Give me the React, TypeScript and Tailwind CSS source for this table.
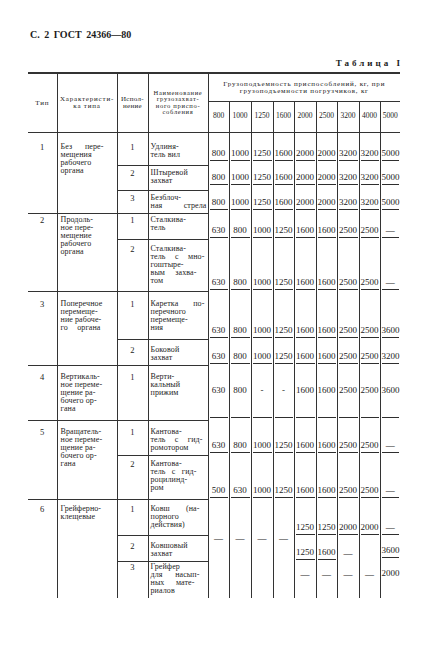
import React from "react";

type Line = string | { t: string; w: string };
type NumCell = { v: string; td: string; div: string };
type Row = { i: string; name: Line[]; h: string; pt: string; cells: NumCell[] };
type Group = { n: string; ch: Line[]; rows: Row[] };

const J = (t: string, w: string): Line => ({ t, w });

const UL = "mx-[1px] border-b border-[#2e2e2e] pb-[2px]";
const PL = "mx-[1px] pb-[2px]";

const under = (vals: string[], pb: string): NumCell[] =>
  vals.map((v) => ({ v, td: "align-bottom " + pb, div: UL }));

const A = ["630", "800", "1000", "1250", "1600", "1600", "2500", "2500", "—"];
const B = ["800", "1000", "1250", "1600", "2000", "2000", "3200", "3200", "5000"];
const empty = (n: number, td: string): NumCell[] =>
  Array.from({ length: n }, () => ({ v: "", td, div: PL }));

const groups: Group[] = [
  {
    n: "1",
    ch: [J("Без пере-", "w-[43px]"), "мещения", "рабочего", "органа"],
    rows: [
      { i: "1", name: ["Удлиня-", "тель вил"], h: "h-[33px]", pt: "pt-[10px]", cells: under(B, "pb-[4px]") },
      { i: "2", name: ["Штыревой", "захват"], h: "h-[25px]", pt: "pt-[3px]", cells: under(B, "pb-[5px]") },
      { i: "3", name: ["Безблоч-", J("ная стрела", "w-[56px]")], h: "h-[23px]", pt: "pt-[3px]", cells: under(B, "pb-[3px]") },
    ],
  },
  {
    n: "2",
    ch: ["Продоль-", "ное пере-", "мещение", "рабочего", "органа"],
    rows: [
      { i: "1", name: ["Сталкива-", "тель"], h: "h-[26px]", pt: "pt-[2px]", cells: under(A, "pb-[1px]") },
      {
        i: "2",
        name: ["Сталкива-", J("тель с мно-", "w-[54px]"), "гоштыре-", J("вым захва-", "w-[46px]"), "том"],
        h: "h-[52px]",
        pt: "pt-[5px]",
        cells: under(A, "pb-[1px]"),
      },
    ],
  },
  {
    n: "3",
    ch: ["Поперечное", "перемеще-", "ние рабоче-", J("го органа", "w-[40px]")],
    rows: [
      {
        i: "1",
        name: [J("Каретка по-", "w-[54px]"), "перечного", "перемеще-", "ния"],
        h: "h-[48px]",
        pt: "pt-[8px]",
        cells: under(["630", "800", "1000", "1250", "1600", "1600", "2500", "2500", "3600"], "pb-[1px]"),
      },
      {
        i: "2",
        name: ["Боковой", "захват"],
        h: "h-[26px]",
        pt: "pt-[6px]",
        cells: under(["630", "800", "1000", "1250", "1600", "1600", "2500", "2500", "3200"], "pb-[1px]"),
      },
    ],
  },
  {
    n: "4",
    ch: ["Вертикаль-", "ное переме-", "щение ра-", "бочего ор-", "гана"],
    rows: [
      {
        i: "1",
        name: ["Верти-", "кальный", "прижим"],
        h: "h-[55px]",
        pt: "pt-[7px]",
        cells: ["630", "800", "-", "-", "1600", "1600", "2500", "2500", "3600"].map((v) => ({
          v,
          td: "align-bottom pb-[2px]",
          div: "mx-[1px] border-b border-[#2e2e2e] pb-[22px]",
        })),
      },
    ],
  },
  {
    n: "5",
    ch: ["Вращатель-", "ное переме-", "щение ра-", "бочего ор-", "гана"],
    rows: [
      {
        i: "1",
        name: ["Кантова-", J("тель с гид-", "w-[52px]"), "ромотором"],
        h: "h-[35px]",
        pt: "pt-[7px]",
        cells: under(A, "pb-[2px]"),
      },
      {
        i: "2",
        name: ["Кантова-", J("тель с гид-", "w-[46px]"), "роцилинд-", "ром"],
        h: "h-[44px]",
        pt: "pt-[4px]",
        cells: under(["500", "630", "1000", "1250", "1600", "1600", "2500", "2500", "—"], "pb-[1px]"),
      },
    ],
  },
  {
    n: "6",
    ch: ["Грейферно-", "клещевые"],
    rows: [
      {
        i: "1",
        name: [J("Ковш (на-", "w-[49px]"), "порного", "действия)"],
        h: "h-[36px]",
        pt: "pt-[5px]",
        cells: [...empty(4, "align-bottom"), ...under(["1250", "1250", "2000", "2000", "—"], "pb-[0px]")],
      },
      {
        i: "2",
        name: ["Ковшовый", "захват"],
        h: "h-[26px]",
        pt: "pt-[6px]",
        cells: [
          ...Array.from({ length: 4 }, () => ({ v: "—", td: "align-top pt-0", div: "mx-[1px] -mt-[2px]" })),
          ...under(["1250", "1600"], "pb-[1px]"),
          { v: "—", td: "align-bottom pb-[1px]", div: PL },
          { v: "", td: "align-bottom", div: PL },
          ...under(["3600"], "pb-[3px]"),
        ],
      },
      {
        i: "3",
        name: ["Грейфер", J("для насып-", "w-[49px]"), J("ных мате-", "w-[44px]"), "риалов"],
        h: "h-[37px]",
        pt: "pt-[1px]",
        cells: [
          ...empty(4, "align-top"),
          ...Array.from({ length: 4 }, () => ({ v: "—", td: "align-top pt-[8px]", div: "mx-[1px]" })),
          { v: "2000", td: "align-top pt-[7px]", div: "mx-[1px]" },
        ],
      },
    ],
  },
];

const heads = ["800", "1000", "1250", "1600", "2000", "2500", "3200", "4000", "5000"];
const line = "border-[#333]";

function Lines({ lines }: { lines: Line[] }) {
  return (
    <>
      {lines.map((l, k) =>
        typeof l === "string" ? (
          <div key={k} className="whitespace-nowrap">{l}</div>
        ) : (
          <div key={k} className={l.w + " whitespace-nowrap [text-align-last:justify]"}>{l.t}</div>
        )
      )}
    </>
  );
}

export default function App() {
  return (
    <div className="w-[429px] h-[646px] overflow-hidden bg-white text-[#1c1c1c] font-['Liberation_Serif',serif] pt-[29px] pl-[28px]">
      <div className="w-[372px]">
        <div className="text-[10px] leading-[12px] font-bold pl-[2px] [word-spacing:2px]">С. 2 ГОСТ 24366—80</div>
        <div className="mt-[17px] text-right text-[9px] leading-[11px] font-bold tracking-[3px] -mr-[3px]">
          Таблица I
        </div>
        <table className="mt-[3px] w-[372px] table-fixed border-collapse">
          <colgroup>
            <col className="w-[29px]" />
            <col className="w-[60px]" />
            <col className="w-[31px]" />
            <col className="w-[60px]" />
            <col className="w-[21px]" />
            <col className="w-[22px]" />
            <col className="w-[22px]" />
            <col className="w-[21px]" />
            <col className="w-[22px]" />
            <col className="w-[21px]" />
            <col className="w-[22px]" />
            <col className="w-[21px]" />
            <col className="w-[20px]" />
          </colgroup>
          <thead className="text-[7px] font-normal tracking-[0.8px]">
            <tr className="h-[28px]">
              <th rowSpan={2} className={"border-t-2 border-b-[1.5px] border-r font-normal align-middle " + line}>
                Тип
              </th>
              <th rowSpan={2} className={"border-t-2 border-b-[1.5px] border-r font-normal align-middle leading-[7px] " + line}>
                Характеристи-<br />ка типа
              </th>
              <th rowSpan={2} className={"border-t-2 border-b-[1.5px] border-r font-normal align-middle leading-[7px] tracking-[0.3px] " + line}>
                Испол-<br />нение
              </th>
              <th rowSpan={2} className={"border-t-2 border-b-[1.5px] border-r font-normal align-middle text-[6.5px] leading-[6.5px] tracking-[0.7px] " + line}>
                Наименование<br />грузозахват-<br />ного приспо-<br />собления
              </th>
              <th colSpan={9} className={"border-t-2 border-b font-normal align-middle leading-[7px] pt-[2px] " + line}>
                Грузоподъемность приспособлений, кг, при<br />грузоподъемности погрузчиков, кг
              </th>
            </tr>
            <tr className="h-[31px]">
              {heads.map((v, k) => (
                <th
                  key={v}
                  className={
                    "border-b-[1.5px] font-normal text-[7.5px] tracking-normal align-middle pb-[2px] " +
                    (k < 8 ? "border-r " : "") +
                    line
                  }
                >
                  {v}
                </th>
              ))}
            </tr>
          </thead>
          <tbody className="text-[8px] leading-[8.2px] tracking-[0.1px]">
            {groups.map((g, gi) => {
              const last = gi === groups.length - 1;
              return g.rows.map((r, ri) => {
                const lastRow = last && ri === g.rows.length - 1;
                return (
                  <tr key={g.n + r.i} className={r.h}>
                    {ri === 0 && (
                      <>
                        <td
                          rowSpan={g.rows.length}
                          className={"border-r align-top text-center text-[8.5px] p-0 " + r.pt + " " + (last ? "" : "border-b ") + line}
                        >
                          {g.n}
                        </td>
                        <td
                          rowSpan={g.rows.length}
                          className={"border-r align-top pl-[3px] pr-0 " + r.pt + " " + (last ? "" : "border-b ") + line}
                        >
                          <Lines lines={g.ch} />
                        </td>
                      </>
                    )}
                    <td className={"border-r align-top text-center text-[8.5px] p-0 " + r.pt + " " + (lastRow ? "" : "border-b ") + line}>
                      {r.i}
                    </td>
                    <td className={"border-r align-top pl-[2px] pr-0 " + r.pt + " " + (lastRow ? "" : "border-b ") + line}>
                      <Lines lines={r.name} />
                    </td>
                    {r.cells.map((c, k) => (
                      <td
                        key={k}
                        className={"p-0 text-center text-[9px] leading-[10px] tracking-normal " + c.td + " " + (k < 8 ? "border-r " : "") + line}
                      >
                        <div className={c.div}>{c.v || "\u00a0"}</div>
                      </td>
                    ))}
                  </tr>
                );
              });
            })}
          </tbody>
        </table>
      </div>
    </div>
  );
}
